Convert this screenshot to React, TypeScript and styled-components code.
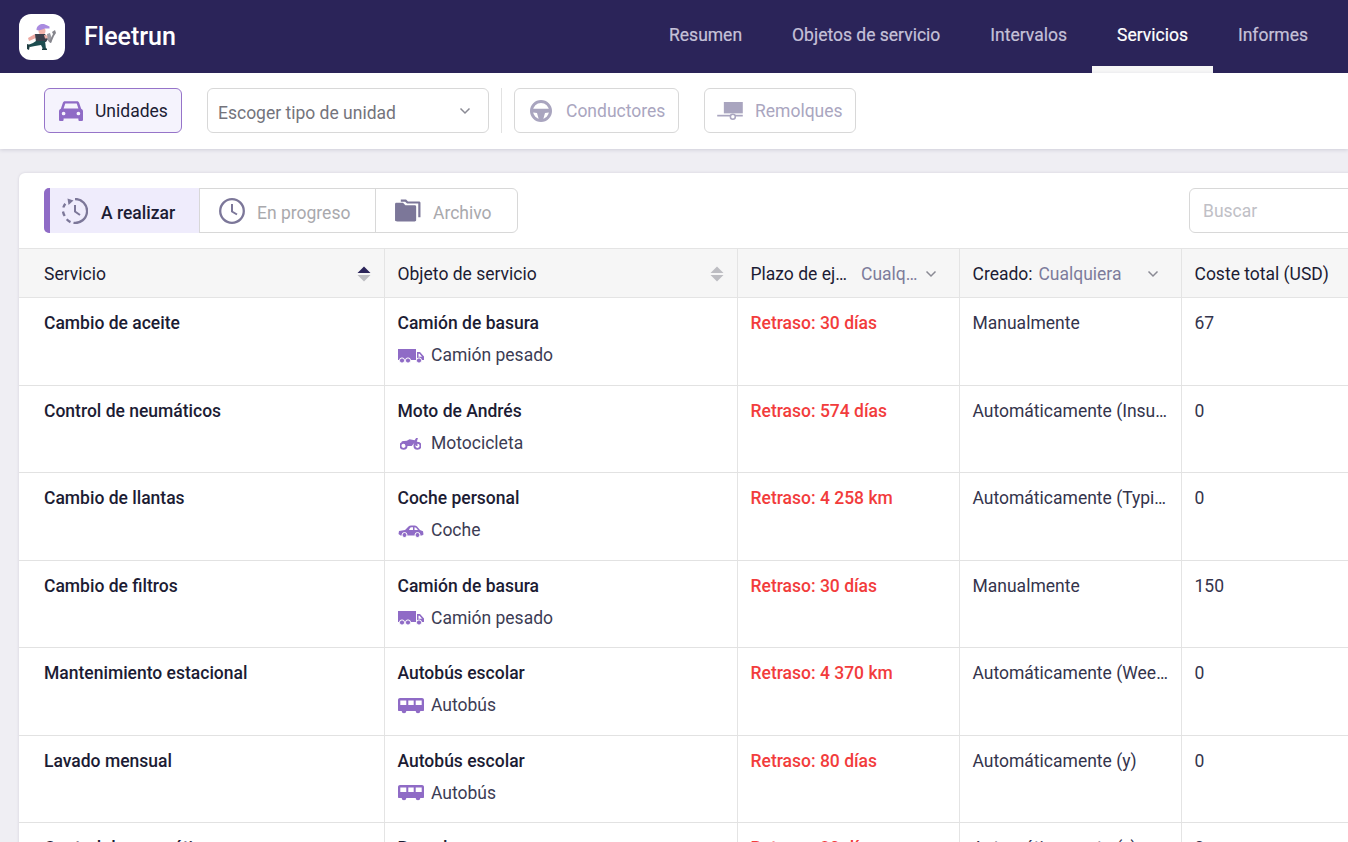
import React from "react";
import styled, { createGlobalStyle } from "styled-components";

const GlobalStyle = createGlobalStyle`
  html, body { margin: 0; padding: 0; height: 100%; overflow: hidden; background: #efeef3; }
  body { font-family: Roboto, "Liberation Sans", sans-serif; color: #1c1c34; }
  * { box-sizing: border-box; }
`;

const Page = styled.div`
  width: 1348px;
  height: 842px;
  overflow: hidden;
`;

const Header = styled.header`
  height: 73px;
  background: #2b2459;
  display: flex;
  align-items: stretch;
  padding: 0 15px 0 19px;
`;

const Brand = styled.div`
  display: flex;
  align-items: center;
  gap: 19px;
  color: #fff;
  font-size: 25px;
  font-weight: 500;
`;

const LogoBox = styled.div`
  width: 46px;
  height: 46px;
  background: #fff;
  border-radius: 12px;
  display: flex;
  align-items: center;
  justify-content: center;
`;

const Nav = styled.nav`
  margin-left: auto;
  display: flex;
`;

const NavItem = styled.a<{ $active?: boolean }>`
  padding: 4px 25px 0;
  height: 73px;
  display: flex;
  align-items: center;
  font-size: 17.5px;
  font-weight: 400;
  -webkit-text-stroke: 0.2px currentColor;
  color: ${(p) => (p.$active ? "#fff" : "#c5c1d8")};
  border-bottom: 7px solid ${(p) => (p.$active ? "#f7f7f7" : "transparent")};
`;

const Toolbar = styled.div`
  height: 76px;
  background: #fff;
  display: flex;
  align-items: flex-start;
  padding: 15px 0 0 44px;
  box-shadow: 0 1px 4px rgba(40, 36, 80, 0.16);
  position: relative;
`;

const TypeButton = styled.div<{ $active?: boolean; $w: number; $ml?: number; $pl: number; $gap: number }>`
  width: ${(p) => p.$w}px;
  margin-left: ${(p) => p.$ml ?? 0}px;
  height: 45px;
  display: flex;
  align-items: center;
  gap: ${(p) => p.$gap}px;
  padding-left: ${(p) => p.$pl}px;
  border-radius: 6px;
  font-size: 17.5px;
  border: 1px solid ${(p) => (p.$active ? "#9674c9" : "#d8d8d8")};
  background: ${(p) => (p.$active ? "#f5f3fd" : "#fff")};
  color: ${(p) => (p.$active ? "#1c1c34" : "#aaa6bf")};
`;

const SelectBox = styled.div`
  width: 282px;
  height: 45px;
  margin-left: 25px;
  display: flex;
  align-items: center;
  justify-content: space-between;
  padding: 0 17px 0 10px;
  border: 1px solid #d8d8d8;
  border-radius: 6px;
  font-size: 17.5px;
  color: #74747c;
`;

const LoweredLabel = styled.span`
  padding-top: 4px;
`;

const Divider = styled.div`
  width: 1px;
  height: 45px;
  background: #e2e2e2;
  margin: 0 12px;
`;

const Card = styled.main`
  width: 1435px;
  margin: 24px 0 0 19px;
  background: #fff;
  border-radius: 6px 0 0 0;
  box-shadow: 0 0 3px rgba(40, 36, 80, 0.14);
`;

const CardBar = styled.div`
  height: 75px;
  display: flex;
  justify-content: space-between;
  align-items: flex-start;
  padding: 15px 25px;
`;

const Tabs = styled.div`
  display: flex;
  height: 45px;
  border: 1px solid #d8d8d8;
  border-radius: 6px;
`;

const Tab = styled.div<{ $active?: boolean; $w: number }>`
  width: ${(p) => p.$w}px;
  display: flex;
  align-items: center;
  gap: ${(p) => (p.$active ? 13 : 12)}px;
  padding-left: ${(p) => (p.$active ? 12 : 19)}px;
  font-size: 17.5px;
  font-weight: ${(p) => (p.$active ? 500 : 400)};
  color: ${(p) => (p.$active ? "#1c1c34" : "#a9a9ad")};
  background: ${(p) => (p.$active ? "#efecfc" : "transparent")};
  border-left: ${(p) => (p.$active ? "6px solid #8f6bc6" : "none")};
  border-right: 1px solid #d8d8d8;
  border-radius: ${(p) => (p.$active ? "5px 0 0 5px" : "0")};
  margin: ${(p) => (p.$active ? "-1px 0 -1px -1px" : "0")};
  &:last-child { border-right: none; }
`;

const SearchBox = styled.div`
  width: 240px;
  height: 45px;
  display: flex;
  align-items: center;
  padding-left: 13px;
  border: 1px solid #d8d8d8;
  border-radius: 6px;
  font-size: 17.5px;
  color: #c0c0c6;
`;

const columns = "366px 353px 222px 222px 1fr";

const HeadRow = styled.div`
  display: grid;
  grid-template-columns: ${columns};
  height: 50px;
  background: #f6f6f6;
  border-top: 1px solid #e4e4e4;
  border-bottom: 1px solid #e4e4e4;
`;

const HeadCell = styled.div<{ $first?: boolean; $pr?: number }>`
  display: flex;
  align-items: center;
  padding: 2px ${(p) => p.$pr ?? 13}px 0 ${(p) => (p.$first ? 25 : 12.5)}px;
  font-size: 17.5px;
  border-right: 1px solid #e4e4e4;
  min-width: 0;
`;

const Clip = styled.span<{ $w: number; $muted?: boolean; $ml?: number }>`
  width: ${(p) => p.$w}px;
  margin-left: ${(p) => p.$ml ?? 0}px;
  flex: none;
  white-space: nowrap;
  overflow: hidden;
  text-overflow: ellipsis;
  color: ${(p) => (p.$muted ? "#7d7c9b" : "inherit")};
`;

const PushRight = styled.span`
  margin-left: auto;
  display: flex;
`;

const BodyRow = styled.div`
  display: grid;
  grid-template-columns: ${columns};
  height: 87.5px;
  border-bottom: 1px solid #e2e2e2;
`;

const Cell = styled.div<{ $first?: boolean }>`
  padding: 15px 12px 0 ${(p) => (p.$first ? 25 : 12.5)}px;
  border-right: 1px solid #e4e4e4;
  font-size: 17.5px;
  line-height: 21px;
  min-width: 0;
  white-space: nowrap;
  overflow: hidden;
  text-overflow: ellipsis;
  color: #34344c;
`;

const Strong = styled.div`
  font-weight: 500;
  color: #1c1c34;
`;

const Overdue = styled.span`
  color: #f23c3c;
  font-weight: 500;
`;

const ObjectType = styled.div`
  display: flex;
  align-items: center;
  gap: 7.5px;
  margin-top: 11px;
  color: #3c3c54;
`;

const IconSlot = styled.span`
  width: 26px;
  height: 21px;
  display: flex;
  align-items: center;
  justify-content: center;
`;

const Logo = () => (
  <svg width="30" height="28" viewBox="28 22 30 28">
    <circle cx="43" cy="30" r="3.500" fill="#f0b3aa" />
    <path d="M37.500 29C37.500 24 42 22.500 45 23L50.500 25.500V27.500L46 27.500 40 29.500z" fill="#a98be0" />
    <path d="M36 33L29 37l1 3 8-3.500z" fill="#eda9a2" />
    <path d="M36 33h10l3 5-2 3H37z" fill="#3b404b" />
    <path d="M45 34l7 1v2l-6 .5z" fill="#f0b3aa" />
    <path d="M37 40h9l1 8h-3l-2-4-6 1-5 1-2-2 5-2z" fill="#1d4d50" />
    <path d="M28 43l3 1-1 5-2-1z" fill="#1d3d40" />
    <path d="M43 47.500h5V49h-5z" fill="#1d3d40" />
    <path d="M48 33l3-1 2 6-1 4-3-2z" fill="#9c9ca3" />
    <path d="M50 41l4-8-1-2 3-2 1 3-2 3-3 7z" fill="#85858c" />
  </svg>
);

const Chevron = ({ color = "#8a8a94" }: { color?: string }) => (
  <svg width="12" height="8" viewBox="0 0 12 8" fill="none">
    <path d="M1.500 1.500L6 6l4.500-4.500" stroke={color} strokeWidth="1.500" />
  </svg>
);

const Sort = ({ up }: { up: string }) => (
  <svg width="14" height="16" viewBox="0 0 14 16">
    <path d="M7 0.500l6.500 6.500H.5z" fill={up} />
    <path d="M.5 9h13L7 15.500z" fill="#bdbdc2" />
  </svg>
);

const CarFront = () => (
  <svg width="24" height="22" viewBox="0 1 26 23">
    <path
      fill="#8f6bc6"
      fillRule="evenodd"
      d="M6.500 2h13c1.200 0 2 .6 2.400 1.700L24 10c1.300.6 2 1.600 2 3v9c0 .8-.6 1.400-1.400 1.400h-2.200c-.8 0-1.400-.6-1.400-1.400v-1.500H5V22c0 .8-.6 1.400-1.400 1.400H1.400C.6 23.400 0 22.800 0 22v-9c0-1.400.7-2.400 2-3l2.100-6.300C4.500 2.600 5.300 2 6.500 2zM6.800 4.500L5 9.800h16l-1.800-5.300zM5 13.200a2 2 0 100 4 2 2 0 000-4zm16 0a2 2 0 100 4 2 2 0 000-4z"
    />
  </svg>
);

const SteeringWheel = () => (
  <svg width="22" height="22" viewBox="1 1 22 22" fill="none">
    <circle cx="12" cy="12" r="9.500" stroke="#a9a5bf" strokeWidth="3" />
    <path d="M2.500 9.700h19v3.500l-5.500.8-2 7h-4l-2-7-5.500-.8z" fill="#a9a5bf" />
  </svg>
);

const Trailer = () => (
  <svg width="26" height="18" viewBox="0 1 27 19" fill="none">
    <rect x="7" y="1" width="20" height="12" fill="#a9a5bf" />
    <path d="M0 14.500h27v1.800H0z" fill="#a9a5bf" />
    <circle cx="16.500" cy="16.500" r="2.600" fill="#fff" stroke="#a9a5bf" strokeWidth="1.600" />
  </svg>
);

const TodoClock = () => (
  <svg width="26" height="26" viewBox="1 1 26 26" fill="none">
    <path d="M14 2a12 12 0 11-1.500 23.900" stroke="#7c7799" strokeWidth="2.300" />
    <path
      d="M9.500 25.100a12 12 0 01-3.800-2.800M3.700 19a12 12 0 01-1.700-4.500M2.300 10.500a12 12 0 012-3.800"
      stroke="#7c7799"
      strokeWidth="2.300"
    />
    <path d="M6.500 1.500l6 2-5 4.500z" fill="#7c7799" />
    <path d="M14 8v6.500l5 3.500" stroke="#7c7799" strokeWidth="2" />
  </svg>
);

const Clock = () => (
  <svg width="26" height="26" viewBox="1 1 26 26" fill="none">
    <circle cx="14" cy="14" r="11.800" stroke="#7c7799" strokeWidth="2.300" />
    <path d="M14 7v7.500l5 3" stroke="#7c7799" strokeWidth="2" />
  </svg>
);

const Folder = () => (
  <svg width="26" height="24" viewBox="1 1 27 25">
    <path
      d="M1 6.500C1 5.500 1.800 5 2.500 5h6.800l2.500 2.500h9.700c1 0 1.500.7 1.500 1.500v14c0 1-.7 1.500-1.500 1.500h-18C1.500 24.500 1 24 1 23z"
      fill="#7c7799"
    />
    <path d="M7 1.500h5.500l2 2H26c.8 0 1.500.6 1.500 1.500v15h-2.300V5.800H13.500l-2-2H7z" fill="#7c7799" />
  </svg>
);

const Truck = () => (
  <svg width="26" height="16" viewBox="0 0 26 16">
    <path d="M0 1h18v11H0z" fill="#8f6bc6" />
    <path fillRule="evenodd" d="M19 4h3l4 4.500V12h-7zm1.500 1.700v3h3.500l-2.500-3z" fill="#8f6bc6" />
    <g fill="#8f6bc6" stroke="#fff" strokeWidth="1">
      <circle cx="4" cy="12.500" r="2.600" />
      <circle cx="10" cy="12.500" r="2.600" />
      <circle cx="21" cy="12.500" r="2.600" />
    </g>
  </svg>
);

const Motorbike = () => (
  <svg width="21" height="13" viewBox="2 1 22 14" fill="none">
    <circle cx="5.500" cy="10.500" r="3.300" stroke="#8f6bc6" strokeWidth="2" />
    <circle cx="20.500" cy="10.500" r="3.300" stroke="#8f6bc6" strokeWidth="2" />
    <path d="M3 5.500l6-.5 3-1.500 5.500 1L19 2h2l-1.200 4 1 4.500-2 .2-1.500-3.500-3 3.500H8L6.500 7.500z" fill="#8f6bc6" />
  </svg>
);

const Car = () => (
  <svg width="26" height="14" viewBox="0 0 26 14">
    <path
      fillRule="evenodd"
      d="M1 7l6-1 3.500-3.500C11.300 1.800 12 1.500 13 1.500h3.500c1 0 1.800.4 2.500 1L22 6l3 1.200.5 3.300-1.500 1H2.500L.5 10zM11 6h4V3.200h-1.500c-.6 0-1 .2-1.400.6zm5.500 0h3.500l-2-2.200c-.4-.4-.8-.6-1.500-.6z"
      fill="#8f6bc6"
    />
    <circle cx="6.500" cy="11" r="2.500" fill="#8f6bc6" stroke="#fff" />
    <circle cx="19.500" cy="11" r="2.500" fill="#8f6bc6" stroke="#fff" />
  </svg>
);

const Bus = () => (
  <svg width="26" height="16" viewBox="0 0 26 16">
    <path
      fillRule="evenodd"
      d="M2 0h22c1.100 0 2 .9 2 2v10c0 .6-.4 1-1 1H1c-.6 0-1-.4-1-1V2C0 .9.900 0 2 0zm.3 2.500V7h6V2.500zm8 0V7h5.400V2.500zm7.400 0V7h6V2.500z"
      fill="#8f6bc6"
    />
    <circle cx="6" cy="13" r="2.300" fill="#8f6bc6" />
    <circle cx="20" cy="13" r="2.300" fill="#8f6bc6" />
  </svg>
);

const typeIcons = {
  "Camión pesado": <Truck />,
  Motocicleta: <Motorbike />,
  Coche: <Car />,
  Autobús: <Bus />,
  Remolque: <Bus />,
};

type Row = {
  service: string;
  object: string;
  type: keyof typeof typeIcons;
  overdue: string;
  created: string;
  cost: string;
};

const rows: Row[] = [
  { service: "Cambio de aceite", object: "Camión de basura", type: "Camión pesado", overdue: "Retraso: 30 días", created: "Manualmente", cost: "67" },
  { service: "Control de neumáticos", object: "Moto de Andrés", type: "Motocicleta", overdue: "Retraso: 574 días", created: "Automáticamente (Insurance)", cost: "0" },
  { service: "Cambio de llantas", object: "Coche personal", type: "Coche", overdue: "Retraso: 4 258 km", created: "Automáticamente (Typical)", cost: "0" },
  { service: "Cambio de filtros", object: "Camión de basura", type: "Camión pesado", overdue: "Retraso: 30 días", created: "Manualmente", cost: "150" },
  { service: "Mantenimiento estacional", object: "Autobús escolar", type: "Autobús", overdue: "Retraso: 4 370 km", created: "Automáticamente (Weekly)", cost: "0" },
  { service: "Lavado mensual", object: "Autobús escolar", type: "Autobús", overdue: "Retraso: 80 días", created: "Automáticamente (y)", cost: "0" },
  { service: "Control de neumáticos", object: "Remolque", type: "Remolque", overdue: "Retraso: 30 días", created: "Automáticamente (y)", cost: "0" },
];

export default function App() {
  return (
    <Page>
      <GlobalStyle />
      <Header>
        <Brand>
          <LogoBox>
            <Logo />
          </LogoBox>
          Fleetrun
        </Brand>
        <Nav>
          <NavItem>Resumen</NavItem>
          <NavItem>Objetos de servicio</NavItem>
          <NavItem>Intervalos</NavItem>
          <NavItem $active>Servicios</NavItem>
          <NavItem>Informes</NavItem>
        </Nav>
      </Header>

      <Toolbar>
        <TypeButton $active $w={138} $pl={14} $gap={12}>
          <CarFront />
          Unidades
        </TypeButton>
        <SelectBox>
          <LoweredLabel>Escoger tipo de unidad</LoweredLabel>
          <Chevron />
        </SelectBox>
        <Divider />
        <TypeButton $w={165} $pl={15} $gap={14}>
          <SteeringWheel />
          Conductores
        </TypeButton>
        <TypeButton $w={152} $ml={25} $pl={12} $gap={12}>
          <Trailer />
          Remolques
        </TypeButton>
      </Toolbar>

      <Card>
        <CardBar>
          <Tabs>
            <Tab $active $w={156}>
              <TodoClock />
              <LoweredLabel>A realizar</LoweredLabel>
            </Tab>
            <Tab $w={176}>
              <Clock />
              <LoweredLabel>En progreso</LoweredLabel>
            </Tab>
            <Tab $w={141}>
              <Folder />
              <LoweredLabel>Archivo</LoweredLabel>
            </Tab>
          </Tabs>
          <SearchBox>Buscar</SearchBox>
        </CardBar>

        <HeadRow>
          <HeadCell $first>
            Servicio
            <PushRight>
              <Sort up="#2b2459" />
            </PushRight>
          </HeadCell>
          <HeadCell>
            Objeto de servicio
            <PushRight>
              <Sort up="#bdbdc2" />
            </PushRight>
          </HeadCell>
          <HeadCell $pr={22}>
            <Clip $w={100}>Plazo de ejecución</Clip>
            <Clip $w={57} $muted $ml={10.5}>
              Cualquiera
            </Clip>
            <PushRight>
              <Chevron />
            </PushRight>
          </HeadCell>
          <HeadCell $pr={22}>
            Creado:&nbsp;
            <Clip $w={90} $muted $ml={1.5}>
              Cualquiera
            </Clip>
            <PushRight>
              <Chevron />
            </PushRight>
          </HeadCell>
          <HeadCell>Coste total (USD)</HeadCell>
        </HeadRow>

        {rows.map((row, i) => (
          <BodyRow key={i}>
            <Cell $first>
              <Strong>{row.service}</Strong>
            </Cell>
            <Cell>
              <Strong>{row.object}</Strong>
              <ObjectType>
                <IconSlot>{typeIcons[row.type]}</IconSlot>
                {row.type}
              </ObjectType>
            </Cell>
            <Cell>
              <Overdue>{row.overdue}</Overdue>
            </Cell>
            <Cell>{row.created}</Cell>
            <Cell>{row.cost}</Cell>
          </BodyRow>
        ))}
      </Card>
    </Page>
  );
}
